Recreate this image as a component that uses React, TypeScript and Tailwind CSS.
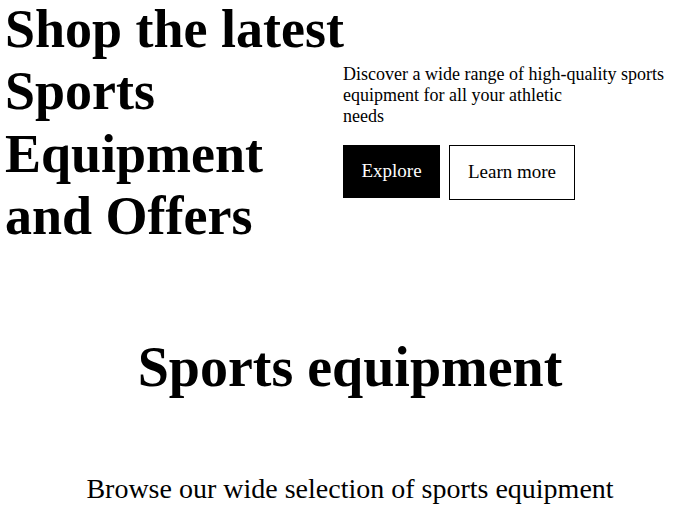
export default function App() {
  return (
    <div className="w-[700px] h-[511px] overflow-hidden bg-white text-black" style={{ fontFamily: '"Liberation Serif", "Times New Roman", serif' }}>
      <div className="flex items-start">
        <h1 className="w-[343px] shrink-0 -mt-[2px] pl-[5px] text-[54px] leading-[62.3px] font-bold whitespace-nowrap">
          Shop the latest
          <br />
          Sports
          <br />
          Equipment
          <br />
          and Offers
        </h1>
        <div className="pt-[64px]">
          <p className="text-[18px] leading-[21px] w-[340px]">
            Discover a wide range of high-quality sports equipment for all your athletic
            <br />
            needs
          </p>
          <div className="flex items-start gap-[9px] mt-[18px]">
            <button className="w-[97px] h-[53px] bg-black text-white text-[19px]">Explore</button>
            <button className="w-[126px] h-[55px] border border-black text-[19px]">Learn more</button>
          </div>
        </div>
      </div>
      <h2 className="mt-[88px] text-center text-[56px] leading-[64px] font-bold">Sports equipment</h2>
      <p className="mt-[74px] text-center text-[28px] leading-[32px]">Browse our wide selection of sports equipment</p>
    </div>
  );
}
